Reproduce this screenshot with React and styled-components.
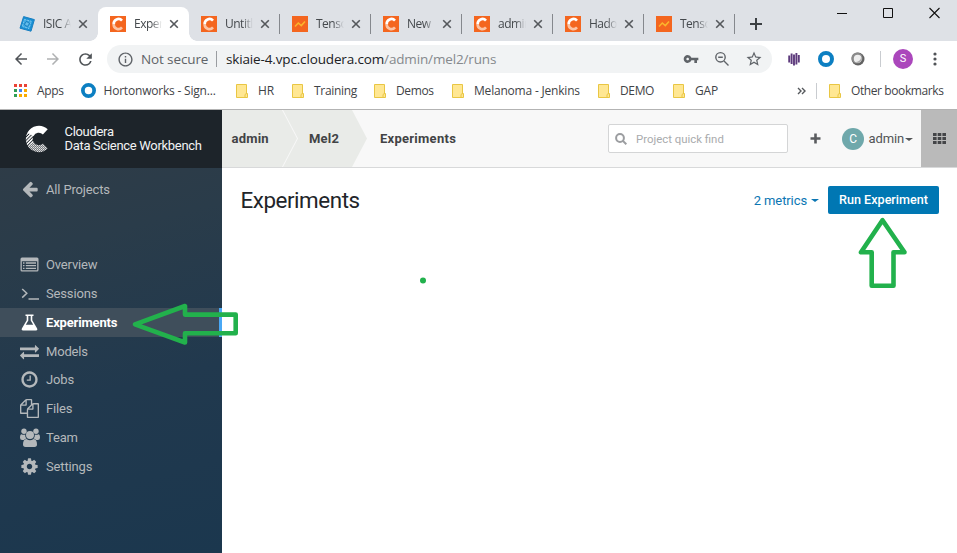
import React from "react";
import styled, { createGlobalStyle } from "styled-components";
import { MdVpnKey, MdStarBorder, MdRefresh, MdArrowBack, MdArrowForward, MdInfoOutline } from "react-icons/md";

const UI = `"Open Sans", "Noto Sans", sans-serif`;

const GlobalStyle = createGlobalStyle`
  *, *::before, *::after { box-sizing: border-box; }
  html, body { margin: 0; padding: 0; overflow: hidden; }
  body { font-family: Roboto, sans-serif; font-size: 13px; background: #fff; }
  svg { display: block; flex: none; }
`;

const Window = styled.div`
  position: relative;
  width: 957px;
  height: 553px;
  display: flex;
  flex-direction: column;
  overflow: hidden;
  background: #fff;
`;

/* ---------- tab strip ---------- */

const TabStrip = styled.div`
  height: 41px;
  flex: none;
  display: flex;
  align-items: flex-end;
  padding-left: 7px;
  background: #dee1e6;
`;

const Tab = styled.div`
  width: 91px;
  height: 34px;
  flex: none;
  display: flex;
  align-items: center;
  padding-left: 12px;
  position: relative;
  border-radius: 8px 8px 0 0;
  background: ${(p) => (p.$active ? "#fff" : "transparent")};
  &::before, &::after {
    content: "";
    display: ${(p) => (p.$active ? "block" : "none")};
    position: absolute;
    bottom: 0;
    width: 8px;
    height: 8px;
  }
  &::before { left: -8px; background: radial-gradient(circle at 0 0, transparent 7.5px, #fff 8px); }
  &::after { right: -8px; background: radial-gradient(circle at 100% 0, transparent 7.5px, #fff 8px); }
`;

const TabTitle = styled.span`
  width: 28px;
  margin: 0 7px 0 8px;
  flex: none;
  overflow: hidden;
  white-space: nowrap;
  font: 12px/18px ${UI};
  letter-spacing: -0.5px;
  color: #45494d;
  mask-image: linear-gradient(to right, #000 62%, transparent 100%);
`;

const TabDivider = styled.span`
  width: 1px;
  height: 20px;
  margin-left: auto;
  background: ${(p) => (p.$show ? "#85888d" : "transparent")};
`;

const NewTab = styled.div`
  height: 34px;
  display: flex;
  align-items: center;
  margin-left: 15px;
`;

const WindowControls = styled.div`
  align-self: flex-start;
  display: flex;
  align-items: center;
  gap: 35px;
  margin: 7px 17px 0 auto;
`;

/* ---------- toolbar ---------- */

const Toolbar = styled.div`
  height: 36px;
  flex: none;
  display: flex;
  align-items: center;
  padding-left: 12px;
`;

const NavButtons = styled.div`
  width: 95px;
  display: flex;
  gap: 14px;
  color: #4f5357;
`;

const NavIcon = styled.span`
  display: flex;
  opacity: ${(p) => (p.$off ? 0.45 : 1)};
`;

const AddressBar = styled.div`
  width: 665px;
  height: 28px;
  padding: 0 9px 0 10px;
  display: flex;
  align-items: center;
  border-radius: 14px;
  background: #f1f3f4;
  color: #5f6368;
  font: 13.5px/20px ${UI};
`;

const Security = styled.span`
  width: 75px;
  margin-left: 7px;
  white-space: nowrap;
  letter-spacing: -0.12px;
`;

const Divider = styled.span`
  width: 1px;
  height: 16px;
  background: ${(p) => p.$color || "#c9ccd0"};
`;

const Url = styled.span`
  margin-left: 9px;
  white-space: nowrap;
  letter-spacing: -0.15px;
  color: #85898d;
  b { font-weight: 400; color: #202124; }
`;

const AddressActions = styled.span`
  display: flex;
  align-items: center;
  gap: 15px;
  margin-left: auto;
`;

const Extensions = styled.div`
  display: grid;
  grid-template-columns: 32px 32px 32px 13px 32px 32px;
  align-items: center;
  justify-items: center;
  margin-left: 6px;
`;

const Profile = styled.span`
  width: 20px;
  height: 20px;
  border-radius: 50%;
  background: #ab47bc;
  color: #fff;
  font: 11px/20px Roboto, sans-serif;
  text-align: center;
`;

/* ---------- bookmarks ---------- */

const BookmarkBar = styled.div`
  height: 33px;
  flex: none;
  display: flex;
  align-items: center;
  padding: 0 0 5px 14px;
  border-bottom: 1px solid #b3b3b3;
  font: 12px/18px ${UI};
  color: #3f4347;
`;

const Bookmark = styled.div`
  width: ${(p) => p.$w}px;
  flex: none;
  display: flex;
  align-items: center;
  gap: ${(p) => p.$gap || 10}px;
  white-space: nowrap;
  letter-spacing: ${(p) => p.$ls || 0}px;
`;

const OtherBookmarks = styled(Bookmark)`
  margin-left: 12px;
`;

const Overflow = styled.span`
  width: 19px;
  flex: none;
  display: flex;
`;

/* ---------- application ---------- */

const AppFrame = styled.div`
  flex: 1;
  display: flex;
  min-height: 0;
`;

const Sidebar = styled.aside`
  width: 222px;
  flex: none;
  background: linear-gradient(165deg, #313c46 0%, #2a3c4a 30%, #21394e 62%, #1b374e 100%);
`;

const Brand = styled.div`
  height: 58px;
  display: flex;
  align-items: center;
  padding-left: 25px;
  gap: 15.5px;
  background: #1d242a;
  color: #f2f3f4;
  font-size: 13px;
  line-height: 14px;
  letter-spacing: -0.31px;
  white-space: nowrap;
`;

const NavRow = styled.div`
  height: 28.9px;
  display: flex;
  align-items: center;
  padding-left: 20px;
  gap: 7px;
  color: ${(p) => (p.$active ? "#fff" : "#b4b8bb")};
  font-size: 13px;
  font-weight: ${(p) => (p.$active ? 700 : 400)};
  letter-spacing: -0.16px;
  background: ${(p) => (p.$active ? "#3f4e5b" : "transparent")};
  border-right: 3px solid ${(p) => (p.$active ? "#4aa8f5" : "transparent")};
`;

const NavGlyph = styled.span`
  width: 19px;
  display: flex;
  justify-content: center;
`;

const BackRow = styled(NavRow)`
  margin-top: 7px;
`;

const NavList = styled.nav`
  margin-top: 46px;
`;

const Main = styled.main`
  flex: 1;
  display: flex;
  flex-direction: column;
`;

const HeaderBar = styled.header`
  height: 58px;
  display: flex;
  align-items: center;
  background: #f8f8f8;
  border-bottom: 1px solid #d8d9da;
`;

const Crumb = styled.div`
  width: ${(p) => p.$w}px;
  height: 57px;
  flex: none;
  padding-left: ${(p) => p.$pad}px;
  font-weight: 700;
  line-height: 57px;
  letter-spacing: 0.22px;
  color: #424345;
  background: #e9ebe8;
  clip-path: polygon(0 0, calc(100% - 15px) 0, 100% 50%, calc(100% - 15px) 100%, 0 100%, ${(p) => (p.$notch ? "15px" : "0")} 50%);
  margin-left: ${(p) => (p.$notch ? -14 : 0)}px;
`;

const CurrentCrumb = styled.div`
  margin-left: 13px;
  font-weight: 700;
  letter-spacing: 0.27px;
  color: #424345;
`;

const QuickFind = styled.div`
  width: 180px;
  height: 29px;
  margin-left: auto;
  padding-left: 6px;
  display: flex;
  align-items: center;
  gap: 9px;
  border: 1px solid #d4d5d6;
  border-radius: 2px;
  background: #fff;
  color: #a9abad;
  font-size: 11.4px;
`;

const AddProject = styled.span`
  display: flex;
  margin: 0 21px 0 22px;
`;

const Account = styled.div`
  width: 79px;
  display: flex;
  align-items: center;
  letter-spacing: -0.1px;
  color: #525456;
`;

const Avatar = styled.span`
  width: 22px;
  height: 22px;
  margin-right: 4.5px;
  border-radius: 50%;
  background: #6fa8ab;
  color: #fff;
  font-size: 12px;
  line-height: 23px;
  text-align: center;
`;

const Caret = styled.i`
  margin-left: ${(p) => p.$gap}px;
  margin-top: 1px;
  border: 4px solid transparent;
  border-top-width: 3.5px;
  border-top-color: currentColor;
  border-bottom: 0;
`;

const AppsButton = styled.div`
  width: 36px;
  height: 57px;
  display: flex;
  align-items: center;
  justify-content: center;
  background: #bababa;
`;

const PageHead = styled.div`
  display: flex;
  align-items: center;
  padding: 18px 18px 0 18.5px;
`;

const Title = styled.h1`
  margin: 0;
  font-size: 22.4px;
  line-height: 28px;
  font-weight: 400;
  letter-spacing: -0.45px;
  color: #222529;
`;

const Metrics = styled.div`
  margin: 0 9px 0 auto;
  display: flex;
  align-items: center;
  letter-spacing: -0.1px;
  color: #0b76b3;
`;

const RunButton = styled.div`
  width: 111px;
  height: 28px;
  border-radius: 2px;
  background: #0077b3;
  color: #fff;
  font-size: 12.6px;
  font-weight: 500;
  line-height: 28px;
  text-align: center;
`;

const Annotations = styled.svg`
  position: absolute;
  inset: 0;
  pointer-events: none;
`;

/* ---------- icons ---------- */

const CloudTile = () => (
  <svg width="16" height="16" viewBox="0 0 16 16">
    <rect width="16" height="16" fill="#f4661f" />
    <path d="M12 4.6A4.8 4.8 0 0 0 3.7 8.2" fill="none" stroke="#fff" strokeWidth="2.7" />
    <path d="M3.7 8A4.7 4.7 0 0 0 12 11.4" fill="none" stroke="#fbc4a5" strokeWidth="2.6" />
  </svg>
);

const ChartTile = () => (
  <svg width="16" height="16" viewBox="0 0 16 16">
    <rect width="16" height="16" fill="#f4661f" />
    <path d="M3 10.5l3.3-3.5 3 2.6L13 5.6" fill="none" stroke="#fbb52c" strokeWidth="1.5" />
  </svg>
);

const IsicMark = () => (
  <svg width="16" height="16" viewBox="0 0 16 16">
    <path d="M4.6.6L15.4 3.6 12 15.2 1 12.2z" fill="#188fd3" stroke="#1b7fc0" strokeWidth="1" />
    <path d="M5.4 3.4l7 1.9-2.4 7.2-6.7-2z" fill="#39a5df" stroke="#8fd0f2" strokeWidth=".8" strokeDasharray="2 .8" />
    <path d="M7.6 5.4l3 2.2-2.3 3-3-2.2z" fill="#64bdea" stroke="#0a6fb2" strokeWidth=".8" />
  </svg>
);

const TabClose = () => (
  <svg width="10" height="10" viewBox="0 0 10 10" stroke="#55585c" strokeWidth="1.6">
    <path d="M1.2 1.2l7.6 7.6M8.8 1.2L1.2 8.8" />
  </svg>
);

const ZoomOut = () => (
  <svg width="16" height="16" viewBox="0 0 16 16" fill="none" stroke="#5f6368" strokeWidth="1.4">
    <circle cx="6.5" cy="6.3" r="4.7" />
    <path d="M10 10l4.5 4.5M4.2 6.3h4.600" />
  </svg>
);

const Bars = () => (
  <svg width="12" height="14" viewBox="0 0 12 14" stroke="#5d3a7c" strokeWidth="1.900">
    <path d="M1.200 3.500v7M3.600 1.500v10.500M6 2.500v11M8.400 1v11.500M10.800 3v7.500" />
  </svg>
);

const Ring = ({ size }) => (
  <svg width={size} height={size} viewBox="0 0 16 16">
    <circle cx="8" cy="8" r="6" fill="#fff" stroke="#0c7fc2" strokeWidth="4" />
  </svg>
);

const Globe = () => (
  <svg width="14" height="14" viewBox="0 0 14 14">
    <circle cx="7" cy="7" r="6.500" fill="#626262" />
    <circle cx="6" cy="6" r="5.500" fill="#8b8b8b" />
    <circle cx="6.700" cy="6.700" r="3.900" fill="#eee" />
    <path d="M10 4.500a4 4 0 0 1-5.500 5.500 5 5 0 0 0 5.500-5.500z" fill="#aaa" />
  </svg>
);

const Dots = () => (
  <svg width="4" height="14" viewBox="0 0 4 14" fill="#505357">
    <circle cx="2" cy="2" r="1.600" /><circle cx="2" cy="7" r="1.600" /><circle cx="2" cy="12" r="1.600" />
  </svg>
);

const Folder = () => (
  <svg width="12" height="14" viewBox="0 0 12 14">
    <path d="M.5.5h10v9h1v4H.5z" fill="#ffe793" stroke="#e9c643" />
    <path d="M9 13V10.500q1-1 2-1" fill="none" stroke="#e9c643" />
  </svg>
);

const GRID_COLORS = ["#ea4335", "#ea4335", "#ea4335", "#2f9e54", "#4285f4", "#f9ab00", "#2f9e54", "#f9ab00", "#f9ab00"];
const AppsGrid = () => (
  <svg width="13" height="13" viewBox="0 0 13 13">
    {GRID_COLORS.map((c, i) => (
      <rect key={i} x={(i % 3) * 5} y={Math.floor(i / 3) * 5} width="3" height="3" fill={c} />
    ))}
  </svg>
);

const ClouderaLogo = () => (
  <svg width="24" height="28" viewBox="0 0 24 28" fill="none">
    <defs>
      <pattern id="hatch" width="2.400" height="2.400" patternUnits="userSpaceOnUse" patternTransform="rotate(-45)">
        <rect width="2.400" height="1.500" fill="#fff" />
      </pattern>
      <pattern id="mesh" width="2" height="2" patternUnits="userSpaceOnUse">
        <rect width="2" height="2" fill="#777b7f" />
        <rect width="1" height="1" fill="#e5e5e5" />
        <rect x="1" y="1" width="1" height="1" fill="#c4c6c8" />
      </pattern>
    </defs>
    <path d="M5.500 9.300A9.400 9.400 0 0 1 20.300 6.900" stroke="#fff" strokeWidth="7" />
    <path d="M6 8.600A9.400 9.400 0 0 0 6.400 20" stroke="url(#hatch)" strokeWidth="7" />
    <path d="M5.800 19.200A9.400 9.400 0 0 0 20.300 21" stroke="url(#mesh)" strokeWidth="7" />
  </svg>
);

const Fa = ({ d, size = 19 }) => (
  <svg width={size} height={size} viewBox="0 0 1792 1792" fill="currentColor"><path d={d} /></svg>
);

const ARROW = "M1664 896v128q0 53-32.500 90.500t-84.500 37.500h-704l293 294q38 36 38 90t-38 90l-75 76q-37 37-90 37-52 0-91-37l-651-652q-37-37-37-90 0-52 37-91l651-650q38-38 91-38 52 0 90 38l75 74q38 38 38 91t-38 91l-293 293h704q52 0 84.500 37.500t32.500 90.500z";
const COG = "M1152 896q0-106-75-181t-181-75-181 75-75 181 75 181 181 75 181-75 75-181zm512-109v222q0 12-8 23t-20 13l-185 28q-19 54-39 91 35 50 107 138 10 12 10 25t-9 23q-27 37-99 108t-94 71q-12 0-26-9l-138-108q-44 23-91 38-16 136-29 186-7 28-36 28h-222q-14 0-24.500-8.500t-11.500-21.500l-28-184q-49-16-90-37l-141 107q-10 9-25 9-14 0-25-11-126-114-165-168-7-10-7-23 0-12 8-23 15-21 51-66.500t54-70.500q-27-50-41-99l-183-27q-13-2-21-12.500t-8-23.500v-222q0-12 8-23t19-13l186-28q14-46 39-92-40-57-107-138-10-12-10-24 0-10 9-23 26-36 98.500-107.500t94.500-71.500q13 0 26 10l138 107q44-23 91-38 16-136 29-186 7-28 36-28h222q14 0 24.500 8.500t11.500 21.500l28 184q49 16 90 37l142-107q9-9 24-9 13 0 25 10 129 119 165 170 7 8 7 22 0 12-8 23-15 21-51 66.500t-54 70.500q26 50 41 98l183 28q13 2 21 12.500t8 23.500z";
const FILES = "M1696 384q40 0 68 28t28 68v1216q0 40-28 68t-68 28h-960q-40 0-68-28t-28-68v-288h-544q-40 0-68-28t-28-68v-672q0-40 20-88t48-76l408-408q28-28 76-48t88-20h416q40 0 68 28t28 68v328q68-40 128-40h416zm-544 213l-299 299h299v-299zm-640-384l-299 299h299v-299zm196 647l316-316v-416h-384v416q0 40-28 68t-68 28h-416v640h512v-256q0-40 20-88t48-76zm956 804v-1152h-384v416q0 40-28 68t-68 28h-416v640h896z";
const CLOCK = "M1024 544v448q0 14-9 23t-23 9h-320q-14 0-23-9t-9-23v-64q0-14 9-23t23-9h224v-352q0-14 9-23t23-9h64q14 0 23 9t9 23zm416 352q0-148-73-273t-198-198-273-73-273 73-198 198-73 273 73 273 198 198 273 73 273-73 198-198 73-273zm224 0q0 209-103 385.500t-279.500 279.500-385.500 103-385.500-103-279.500-279.500-103-385.500 103-385.500 279.500-279.500 385.500-103 385.500 103 279.500 279.500 103 385.500z";
const EXCHANGE = "M1792 1184v192q0 13-9.500 22.500t-22.500 9.500h-1376v192q0 13-9.500 22.500t-22.500 9.500q-12 0-24-10l-319-320q-9-9-9-22 0-14 9-23l320-320q9-9 23-9 13 0 22.500 9.500t9.500 22.500v192h1376q13 0 22.500 9.500t9.500 22.500zm0-544q0 14-9 23l-320 320q-9 9-23 9-13 0-22.500-9.500t-9.500-22.500v-192h-1376q-13 0-22.500-9.500t-9.500-22.500v-192q0-13 9.500-22.500t22.500-9.500h1376v-192q0-14 9-23t23-9q12 0 24 10l319 319q9 9 9 23z";

const ListIcon = () => (
  <svg width="19" height="15" viewBox="0 0 19 15">
    <path d="M2 .5h15a1.500 1.500 0 0 1 1.500 1.500v11a1.500 1.500 0 0 1-1.500 1.500H2A1.500 1.500 0 0 1 .5 13V2A1.500 1.500 0 0 1 2 .5zM1.800 4.200v9h15.400v-9z" fill="currentColor" fillRule="evenodd" />
    <path d="M3 6h1.500M3 8.700h1.500M3 11.400h1.500M5.800 6H16M5.800 8.700H16M5.800 11.400H16" stroke="currentColor" strokeWidth="1.300" />
  </svg>
);

const TerminalIcon = () => (
  <svg width="18" height="13" viewBox="0 0 18 13" fill="none" stroke="currentColor" strokeWidth="1.500">
    <path d="M1.200 2l4.600 4.300-4.600 4.300M7.500 12H18" />
  </svg>
);

const FlaskIcon = () => (
  <svg width="17" height="17" viewBox="0 0 17 17" fill="currentColor">
    <path d="M4.500.5h8v1.500h-1.200v4.200l4.700 8q1.100 2.300-1.200 2.300H2.200q-2.300 0-1.200-2.300l4.700-8V2H4.500zM7.300 2v4.600L4.800 10.700h7.400L9.700 6.600V2z" fillRule="evenodd" />
  </svg>
);

const TeamIcon = () => (
  <svg width="20" height="19" viewBox="0 0 20 19" fill="currentColor">
    <circle cx="4" cy="3.200" r="2.700" /><circle cx="16" cy="3.200" r="2.700" />
    <path d="M5.200 6.400a5.500 5.500 0 0 0 1.300 4.200q-1.500.2-2.600 1.400H2.200Q0 12 0 9.700 0 6.200 1.500 6.200q1.800 1.200 3.700.2zM14.800 6.400a5.500 5.500 0 0 1-1.300 4.200q1.500.2 2.600 1.400h1.700Q20 12 20 9.700 20 6.200 18.500 6.200q-1.800 1.200-3.700.2z" />
    <circle cx="10" cy="7" r="4" />
    <path d="M6.400 10.900q3.600 2.500 7.200 0 3.400.4 3.400 5.400 0 2.600-2.500 2.600h-9Q3 18.900 3 16.300q0-5 3.400-5.400z" />
  </svg>
);

const SearchIcon = () => (
  <svg width="12" height="12" viewBox="0 0 12 12" fill="none" stroke="#9b9da0" strokeWidth="2">
    <circle cx="5" cy="5" r="3.900" /><path d="M7.900 7.900l3.400 3.400" />
  </svg>
);

const TABS = [
  { title: "ISIC Archive", icon: <IsicMark /> },
  { title: "Experiments", icon: <CloudTile />, active: true },
  { title: "Untitled", icon: <CloudTile />, divider: true },
  { title: "Tensorboard", icon: <ChartTile />, divider: true },
  { title: "New", icon: <CloudTile />, divider: true },
  { title: "admin", icon: <CloudTile />, divider: true },
  { title: "Hadoop", icon: <CloudTile />, divider: true },
  { title: "Tensorboard", icon: <ChartTile />, divider: true },
];

const FOLDERS = [
  { name: "HR", w: 56 },
  { name: "Training", w: 82, ls: -0.3 },
  { name: "Demos", w: 78, ls: -0.35 },
  { name: "Melanoma - Jenkins", w: 146 },
  { name: "DEMO", w: 75, ls: -0.35 },
  { name: "GAP", w: 124 },
];

const NAV = [
  { name: "Overview", icon: <ListIcon /> },
  { name: "Sessions", icon: <TerminalIcon /> },
  { name: "Experiments", icon: <FlaskIcon />, active: true },
  { name: "Models", icon: <Fa d={EXCHANGE} /> },
  { name: "Jobs", icon: <Fa d={CLOCK} /> },
  { name: "Files", icon: <Fa d={FILES} /> },
  { name: "Team", icon: <TeamIcon /> },
  { name: "Settings", icon: <Fa d={COG} /> },
];

export default function App() {
  return (
    <Window>
      <GlobalStyle />
      <TabStrip>
        {TABS.map((t, i) => (
          <Tab key={i} $active={t.active}>
            {t.icon}
            <TabTitle>{t.title}</TabTitle>
            <TabClose />
            <TabDivider $show={t.divider} />
          </Tab>
        ))}
        <NewTab>
          <svg width="12" height="12" viewBox="0 0 12 12"><path d="M6 0v12M0 6h12" stroke="#3c4043" strokeWidth="2" /></svg>
        </NewTab>
        <WindowControls>
          <svg width="11" height="12" viewBox="0 0 11 12"><path d="M0 6.500h10" stroke="#111" /></svg>
          <svg width="11" height="12" viewBox="0 0 11 12"><path d="M.5 1.500h9v9h-9z" fill="none" stroke="#111" /></svg>
          <svg width="11" height="12" viewBox="0 0 11 12"><path d="M.5 1l10 10M10.500 1l-10 10" stroke="#111" strokeWidth="1.100" /></svg>
        </WindowControls>
      </TabStrip>

      <Toolbar>
        <NavButtons>
          <NavIcon><MdArrowBack size={18} /></NavIcon>
          <NavIcon $off><MdArrowForward size={18} /></NavIcon>
          <NavIcon><MdRefresh size={19} /></NavIcon>
        </NavButtons>
        <AddressBar>
          <MdInfoOutline size={17} />
          <Security>Not secure</Security>
          <Divider $color="#9a9da1" />
          <Url><b>skiaie-4.vpc.cloudera.com</b>/admin/mel2/runs</Url>
          <AddressActions>
            <MdVpnKey size={16} />
            <ZoomOut />
            <MdStarBorder size={18} />
          </AddressActions>
        </AddressBar>
        <Extensions>
          <Bars />
          <Ring size={16} />
          <Globe />
          <Divider />
          <Profile>S</Profile>
          <Dots />
        </Extensions>
      </Toolbar>

      <BookmarkBar>
        <Bookmark $w={66.500} $ls={-0.3}><AppsGrid />Apps</Bookmark>
        <Bookmark $w={155.500} $gap={8} $ls={-0.2}><Ring size={15} />Hortonworks - Sign...</Bookmark>
        {FOLDERS.map((f) => (
          <Bookmark key={f.name} $w={f.w} $ls={f.ls || -0.2}><Folder />{f.name}</Bookmark>
        ))}
        <Overflow>
          <svg width="9" height="8" viewBox="0 0 9 8"><path d="M1 1l3 3-3 3M5 1l3 3-3 3" fill="none" stroke="#55585c" strokeWidth="1.400" /></svg>
        </Overflow>
        <Divider />
        <OtherBookmarks $w={117} $ls={-0.4}><Folder />Other bookmarks</OtherBookmarks>
      </BookmarkBar>

      <AppFrame>
        <Sidebar>
          <Brand>
            <ClouderaLogo />
            <span>Cloudera<br />Data Science Workbench</span>
          </Brand>
          <BackRow><NavGlyph><Fa d={ARROW} size={18} /></NavGlyph>All Projects</BackRow>
          <NavList>
            {NAV.map((n) => (
              <NavRow key={n.name} $active={n.active}><NavGlyph>{n.icon}</NavGlyph>{n.name}</NavRow>
            ))}
          </NavList>
        </Sidebar>
        <Main>
          <HeaderBar>
            <Crumb $w={75} $pad={9.500}>admin</Crumb>
            <Crumb $w={84} $pad={26} $notch>Mel2</Crumb>
            <CurrentCrumb>Experiments</CurrentCrumb>
            <QuickFind><SearchIcon />Project quick find</QuickFind>
            <AddProject>
              <svg width="11" height="11" viewBox="0 0 11 11"><path d="M5.500 .5v10M.5 5.500h10" stroke="#5a5c5f" strokeWidth="2.600" /></svg>
            </AddProject>
            <Account><Avatar>C</Avatar>admin<Caret $gap={1} /></Account>
            <AppsButton>
              <svg width="13" height="11" viewBox="0 0 13 11" fill="#444548">
                {[0, 1, 2].map((r) => [0, 1, 2].map((c) => <rect key={`${r}${c}`} x={c * 4.700} y={r * 4} width="3.600" height="3" />))}
              </svg>
            </AppsButton>
          </HeaderBar>
          <PageHead>
            <Title>Experiments</Title>
            <Metrics>2 metrics<Caret $gap={4} /></Metrics>
            <RunButton>Run Experiment</RunButton>
          </PageHead>
        </Main>
      </AppFrame>

      <Annotations width="957" height="553" viewBox="0 0 957 553" fill="none" stroke="#22b14c" strokeWidth="4.600" strokeLinejoin="round">
        <path d="M135 324.300L185 306v8.600h50.700v18.700H185v9.200z" />
        <path d="M882.500 220.200L861 252.300h10.700v33.400h21.800v-33.400h11z" />
        <circle cx="423" cy="280.500" r="3" fill="#22b14c" stroke="none" />
      </Annotations>
    </Window>
  );
}
